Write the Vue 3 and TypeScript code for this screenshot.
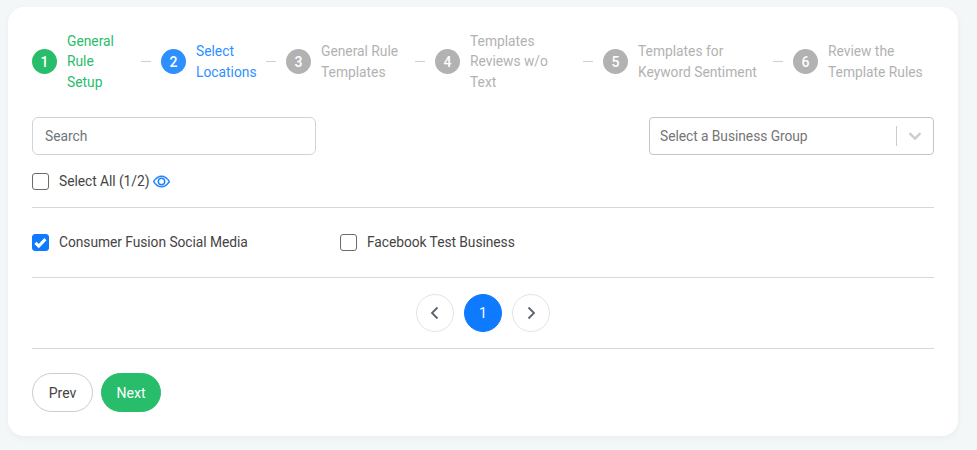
<template>
  <div class="page">
    <div class="card">
      <div class="steps">
        <template v-for="(step, i) in steps" :key="step.num">
          <div :class="['step', step.state]">
            <span class="step-num">{{ step.num }}</span>
            <span class="step-label" :style="{ width: step.width + 'px' }">{{ step.label }}</span>
          </div>
          <span v-if="i < steps.length - 1" class="step-line"></span>
        </template>
      </div>

      <div class="filters">
        <input class="search" type="text" placeholder="Search" />
        <div class="select">
          <span class="select-text">Select a Business Group</span>
          <span class="select-sep"></span>
          <svg class="select-arrow" viewBox="0 0 20 20" width="20" height="20">
            <path d="M4.5 7.2L10 12.6l5.5-5.4" fill="none" stroke="#cccccc" stroke-width="2.4" />
          </svg>
        </div>
      </div>

      <div class="select-all">
        <span class="box"></span>
        <span class="check-label">Select All (1/2)</span>
        <svg class="eye" viewBox="0 0 16 16" width="17" height="17" fill="#0d7aff" stroke="#0d7aff" stroke-width="0.4">
          <path d="M16 8s-3-5.5-8-5.5S0 8 0 8s3 5.5 8 5.5S16 8 16 8zM1.17 8a13.1 13.1 0 0 1 1.66-2.04C4.12 4.67 5.88 3.5 8 3.5s3.88 1.17 5.17 2.46A13.1 13.1 0 0 1 14.83 8c-.06.09-.12.19-.2.3-.33.48-.82 1.12-1.46 1.74C11.88 11.33 10.12 12.5 8 12.5s-3.88-1.17-5.17-2.46A13.1 13.1 0 0 1 1.17 8z" />
          <path d="M8 5.5a2.5 2.5 0 1 0 0 5 2.5 2.5 0 0 0 0-5zM4.5 8a3.5 3.5 0 1 1 7 0 3.5 3.5 0 0 1-7 0z" />
        </svg>
      </div>

      <div class="locations">
        <div v-for="loc in locations" :key="loc.name" class="location">
          <span :class="['box', { checked: loc.checked }]">
            <svg v-if="loc.checked" viewBox="0 0 17 17" width="17" height="17">
              <path d="M3.4 8.8l3.4 3.3 6.6-7" fill="none" stroke="#fff" stroke-width="3" />
            </svg>
          </span>
          <span class="check-label">{{ loc.name }}</span>
        </div>
      </div>

      <div class="pagination">
        <button class="page-btn" type="button" aria-label="Previous">
          <svg viewBox="0 0 16 16" width="16" height="16">
            <path d="M10.5 2.5L5 8l5.5 5.5" fill="none" stroke="#5c636a" stroke-width="1.8" />
          </svg>
        </button>
        <button class="page-btn active" type="button">1</button>
        <button class="page-btn" type="button" aria-label="Next">
          <svg viewBox="0 0 16 16" width="16" height="16">
            <path d="M5.5 2.5L11 8l-5.5 5.5" fill="none" stroke="#5c636a" stroke-width="1.8" />
          </svg>
        </button>
      </div>

      <div class="actions">
        <button class="btn prev" type="button">Prev</button>
        <button class="btn next" type="button">Next</button>
      </div>
    </div>
  </div>
</template>

<script setup lang="ts">
interface Step {
  num: number;
  label: string;
  state: 'done' | 'current' | 'todo';
  width: number;
}

const steps: Step[] = [
  { num: 1, label: 'General Rule Setup', state: 'done', width: 64 },
  { num: 2, label: 'Select Locations', state: 'current', width: 60 },
  { num: 3, label: 'General Rule Templates', state: 'todo', width: 84 },
  { num: 4, label: 'Templates Reviews w/o Text', state: 'todo', width: 103 },
  { num: 5, label: 'Templates for Keyword Sentiment', state: 'todo', width: 125 },
  { num: 6, label: 'Review the Template Rules', state: 'todo', width: 106 },
];

const locations = [
  { name: 'Consumer Fusion Social Media', checked: true },
  { name: 'Facebook Test Business', checked: false },
];
</script>

<style>
html,
body {
  background: #f3f7f8;
}
</style>

<style scoped>
.page {
  padding: 7px 19px 14px 8px;
  font-family: Roboto, 'Liberation Sans', sans-serif;
  font-size: 13.8px;
  letter-spacing: -0.05px;
  color: #444;
}

.card {
  background: #fff;
  border-radius: 16px;
  padding: 24px;
  height: 429px;
  box-sizing: border-box;
  box-shadow: 0 2px 6px rgba(30, 60, 90, 0.05);
}

.steps {
  display: flex;
  align-items: center;
  height: 61px;
}

.step {
  display: flex;
  align-items: center;
  gap: 10px;
  color: #b2b2b2;
  letter-spacing: 0;
}

.step-num {
  flex-shrink: 0;
  width: 25px;
  height: 25px;
  border-radius: 50%;
  background: #b2b2b2;
  color: #fff;
  display: flex;
  align-items: center;
  justify-content: center;
  font-size: 14px;
  font-weight: 500;
}

.step-label {
  font-size: 13.8px;
  line-height: 20.5px;
}

.done {
  color: #28bd6b;
}

.done .step-num {
  background: #28bd6b;
}

.current {
  color: #2e8fff;
}

.current .step-num {
  background: #2e8fff;
}

.step-line {
  flex-shrink: 0;
  width: 10px;
  height: 1px;
  margin: 0 10px;
  background: #cfcfcf;
}

.filters {
  display: flex;
  justify-content: space-between;
  margin-top: 25px;
}

.search {
  width: 284px;
  height: 38px;
  box-sizing: border-box;
  padding: 0 12px;
  border: 1px solid #ced4da;
  border-radius: 6px;
  font-family: inherit;
  font-size: 13.8px;
  outline: none;
}

.search::placeholder {
  color: #6c757d;
  opacity: 1;
}

.select {
  width: 285px;
  height: 38px;
  box-sizing: border-box;
  display: flex;
  align-items: center;
  padding-left: 10px;
  border: 1px solid #c4c4c4;
  border-radius: 4px;
  color: #757575;
}

.select-text {
  flex: 1;
}

.select-sep {
  width: 1px;
  height: 20px;
  background: #ccc;
}

.select-arrow {
  margin: 0 8px;
}

.select-all {
  display: flex;
  align-items: center;
  margin-top: 18px;
  padding-bottom: 17px;
  border-bottom: 1px solid #d8d8d8;
}

.box {
  flex-shrink: 0;
  width: 17px;
  height: 17px;
  box-sizing: border-box;
  border: 1px solid #6b6b6b;
  border-radius: 3px;
  display: flex;
  align-items: center;
  justify-content: center;
}

.box.checked {
  background: #0d7aff;
  border-color: #0d7aff;
}

.box.checked svg {
  flex-shrink: 0;
}

.check-label {
  margin-left: 10px;
  line-height: 17px;
}

.eye {
  margin-left: 4px;
}

.locations {
  display: grid;
  grid-template-columns: repeat(2, 308px);
  padding: 26px 0;
  border-bottom: 1px solid #d8d8d8;
}

.location {
  display: flex;
  align-items: center;
}

.pagination {
  display: flex;
  justify-content: center;
  gap: 10px;
  padding: 16px 0;
  border-bottom: 1px solid #d8d8d8;
}

.page-btn {
  width: 38px;
  height: 38px;
  padding: 0;
  border: 1px solid #e1e4e8;
  border-radius: 50%;
  background: #fff;
  display: flex;
  align-items: center;
  justify-content: center;
  font-family: inherit;
  font-size: 14px;
}

.page-btn.active {
  background: #0d7aff;
  border-color: #0d7aff;
  color: #fff;
}

.actions {
  display: flex;
  gap: 8px;
  margin-top: 24px;
}

.btn {
  height: 39px;
  padding: 0;
  border-radius: 20px;
  font-family: inherit;
  font-size: 14px;
}

.prev {
  width: 61px;
  background: #fff;
  border: 1px solid #ccc;
  color: #444;
}

.next {
  width: 60px;
  background: #28bd6b;
  border: 1px solid #28bd6b;
  color: #fff;
}
</style>
